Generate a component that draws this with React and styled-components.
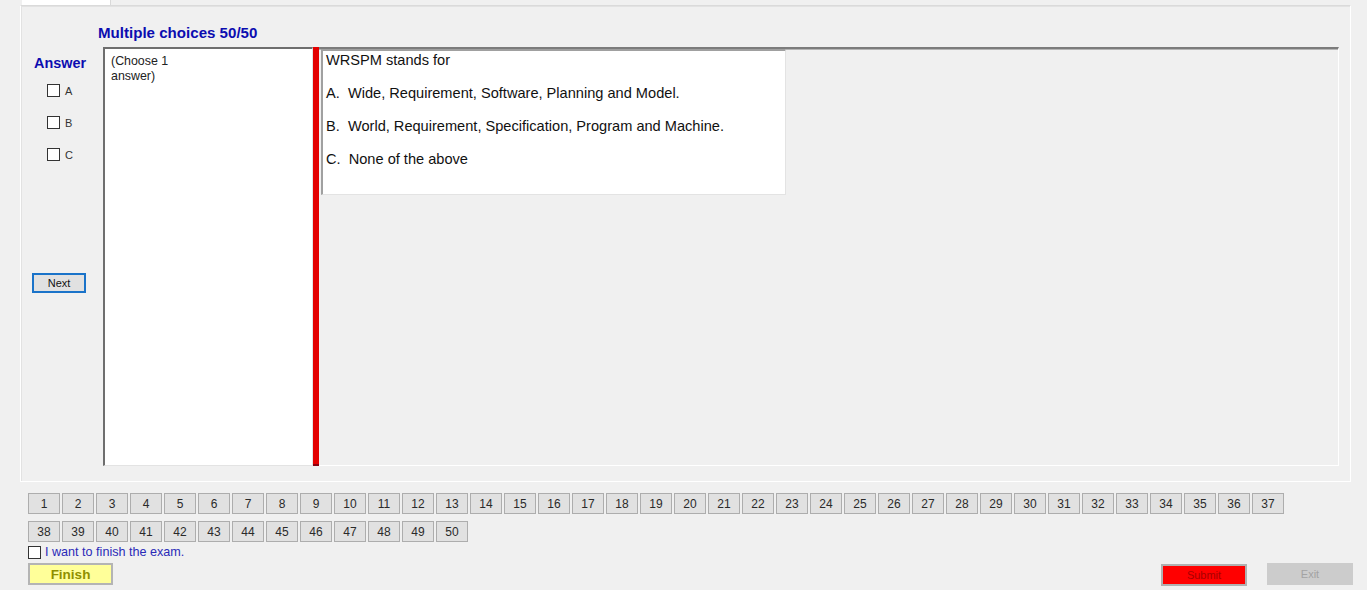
import styled, { createGlobalStyle } from "styled-components";

const options = ["A", "B", "C"];
const questionLines = [
  "WRSPM stands for",
  "A.  Wide, Requirement, Software, Planning and Model.",
  "B.  World, Requirement, Specification, Program and Machine.",
  "C.  None of the above",
];
const numbers = Array.from({ length: 50 }, (_, i) => i + 1);

export default function App() {
  return (
    <>
      <Global />
      <Window>
        <TabStrip>
          <Tab />
        </TabStrip>

        <TabPage>
          <Title>Multiple choices 50/50</Title>

          <MainRow>
            {/* answer column */}
            <LeftCol>
              <AnswerLabel>Answer</AnswerLabel>
              <OptionList>
                {options.map((o) => (
                  <OptionRow key={o}>
                    <Check type="checkbox" />
                    <OptionText>{o}</OptionText>
                  </OptionRow>
                ))}
              </OptionList>
              <NextButton>Next</NextButton>
            </LeftCol>

            <HintBox>
              (Choose 1
              <br />
              answer)
            </HintBox>

            <Splitter />

            <RightPane>
              <QuestionBox>
                {questionLines.map((l) => (
                  <QuestionLine key={l}>{l}</QuestionLine>
                ))}
              </QuestionBox>
            </RightPane>
          </MainRow>
        </TabPage>

        <NavGrid>
          {numbers.map((n) => (
            <NumButton key={n}>{n}</NumButton>
          ))}
        </NavGrid>

        <FinishRow>
          <Check type="checkbox" />
          <FinishText>I want to finish the exam.</FinishText>
        </FinishRow>

        <ActionBar>
          <FinishButton>Finish</FinishButton>
          <RightActions>
            <SubmitButton>Submit</SubmitButton>
            <ExitButton>Exit</ExitButton>
          </RightActions>
        </ActionBar>
      </Window>
    </>
  );
}

/* ─── Shell ─── */

const Global = createGlobalStyle`
  body {
    margin: 0;
    background: #ffffff;
    font-family: "Liberation Sans", Arial, sans-serif;
  }
`;

const Window = styled.div`
  width: 1367px;
  height: 590px;
  background: #f0f0f0;
  display: flex;
  flex-direction: column;
  overflow: hidden;
`;

const TabStrip = styled.div`
  height: 5px;
  padding-left: 22px;
  display: flex;
`;

const Tab = styled.div`
  width: 88px;
  height: 5px;
  background: #ffffff;
  border-right: 1px solid #d9d9d9;
`;

const TabPage = styled.section`
  margin-left: 20px;
  width: 1331px;
  height: 477px;
  box-sizing: border-box;
  border-top: 1px solid #dadada;
  border-left: 1px solid #ffffff;
  border-right: 1px solid #ffffff;
  border-bottom: 1px solid #ffffff;
  box-shadow: inset 1px 1px 0 #e2e2e2;
  display: flex;
  flex-direction: column;
`;

const Title = styled.h2`
  margin: 0;
  height: 41px;
  box-sizing: border-box;
  padding: 18px 0 0 77px;
  color: #0c0cb0;
  font-size: 15.1px;
  font-weight: 700;
  line-height: 17px;
`;

const MainRow = styled.div`
  display: grid;
  grid-template-columns: 82px 210px 6px 1020px;
  height: 419px;
`;

/* ─── Answer column ─── */

const LeftCol = styled.div`
  display: flex;
  flex-direction: column;
  align-items: flex-start;
  padding: 8px 0 0 11px;
`;

const AnswerLabel = styled.div`
  margin-left: 2px;
  color: #0c0cb0;
  font-size: 14.4px;
  font-weight: 700;
  line-height: 16px;
`;

const OptionList = styled.div`
  display: flex;
  flex-direction: column;
  gap: 19px;
  padding: 13px 0 0 15px;
`;

const OptionRow = styled.label`
  display: flex;
  align-items: center;
  gap: 5px;
  height: 13px;
`;

const Check = styled.input`
  appearance: none;
  margin: 0;
  width: 13px;
  height: 13px;
  box-sizing: border-box;
  border: 1px solid #333333;
  background: #ffffff;
`;

const OptionText = styled.span`
  color: #333333;
  font-size: 11px;
`;

const NextButton = styled.button`
  margin-top: 112px;
  width: 54px;
  height: 20px;
  box-sizing: border-box;
  border: 2px solid #1a73c9;
  background: #e1e1e1;
  color: #111111;
  font-family: "Liberation Sans", Arial, sans-serif;
  font-size: 11px;
  padding: 0;
`;

/* ─── Text panes ─── */

const HintBox = styled.div`
  background: #ffffff;
  box-sizing: border-box;
  border-top: 2px solid #6e6e6e;
  border-left: 2px solid #6e6e6e;
  border-right: 1px solid #e3e3e3;
  border-bottom: 1px solid #e3e3e3;
  padding: 5px 6px;
  color: #222222;
  font-size: 12.4px;
  line-height: 15px;
`;

const Splitter = styled.div`
  background: #e30000;
  border-bottom: 2px solid #8a0010;
`;

const RightPane = styled.div`
  box-sizing: border-box;
  border-top: 2px solid #7c7c7c;
  border-right: 1px solid #ffffff;
  border-bottom: 1px solid #ffffff;
  box-shadow: inset 0 1px 0 #b5b5b5;
  padding-left: 2px;
`;

const QuestionBox = styled.div`
  width: 465px;
  height: 146px;
  box-sizing: border-box;
  background: #ffffff;
  border-top: 2px solid #a0a0a0;
  border-left: 2px solid #a0a0a0;
  border-right: 1px solid #e3e3e3;
  border-bottom: 1px solid #e3e3e3;
  padding: 1px 0 0 3px;
  display: flex;
  flex-direction: column;
  gap: 16px;
`;

const QuestionLine = styled.p`
  margin: 0;
  color: #111111;
  font-size: 14.6px;
  line-height: 17px;
  white-space: pre;
`;

/* ─── Bottom ─── */

const NavGrid = styled.div`
  display: grid;
  grid-template-columns: repeat(37, 32px);
  gap: 7px 2px;
  margin: 11px 0 0 28px;
`;

const NumButton = styled.button`
  width: 32px;
  height: 21px;
  box-sizing: border-box;
  border: 1px solid #adadad;
  background: #e1e1e1;
  color: #2a2a2a;
  font-family: "Liberation Sans", Arial, sans-serif;
  font-size: 12px;
  padding: 0;
`;

const FinishRow = styled.label`
  display: flex;
  align-items: center;
  gap: 4px;
  margin: 3px 0 0 28px;
  height: 14px;
`;

const FinishText = styled.span`
  color: #2a2ab8;
  font-size: 12.6px;
`;

const ActionBar = styled.div`
  display: flex;
  justify-content: space-between;
  align-items: flex-start;
  margin-top: 4px;
  padding: 0 14px 0 28px;
`;

const FinishButton = styled.button`
  width: 85px;
  height: 22px;
  box-sizing: border-box;
  border: 2px solid #b4b4b4;
  background: #ffff99;
  color: #8f8f00;
  font-family: "Liberation Sans", Arial, sans-serif;
  font-size: 13.5px;
  font-weight: 700;
  padding: 0;
`;

const RightActions = styled.div`
  display: flex;
  gap: 20px;
`;

const SubmitButton = styled.button`
  margin-top: 1px;
  width: 86px;
  height: 22px;
  box-sizing: border-box;
  border: 2px solid #b0b0b0;
  background: #ff0000;
  color: #a80000;
  font-family: "Liberation Sans", Arial, sans-serif;
  font-size: 11px;
  padding: 0;
`;

const ExitButton = styled.button`
  width: 86px;
  height: 22px;
  box-sizing: border-box;
  border: 1px solid #cccccc;
  background: #cccccc;
  color: #a3a3a3;
  font-family: "Liberation Sans", Arial, sans-serif;
  font-size: 11px;
  padding: 0;
`;
